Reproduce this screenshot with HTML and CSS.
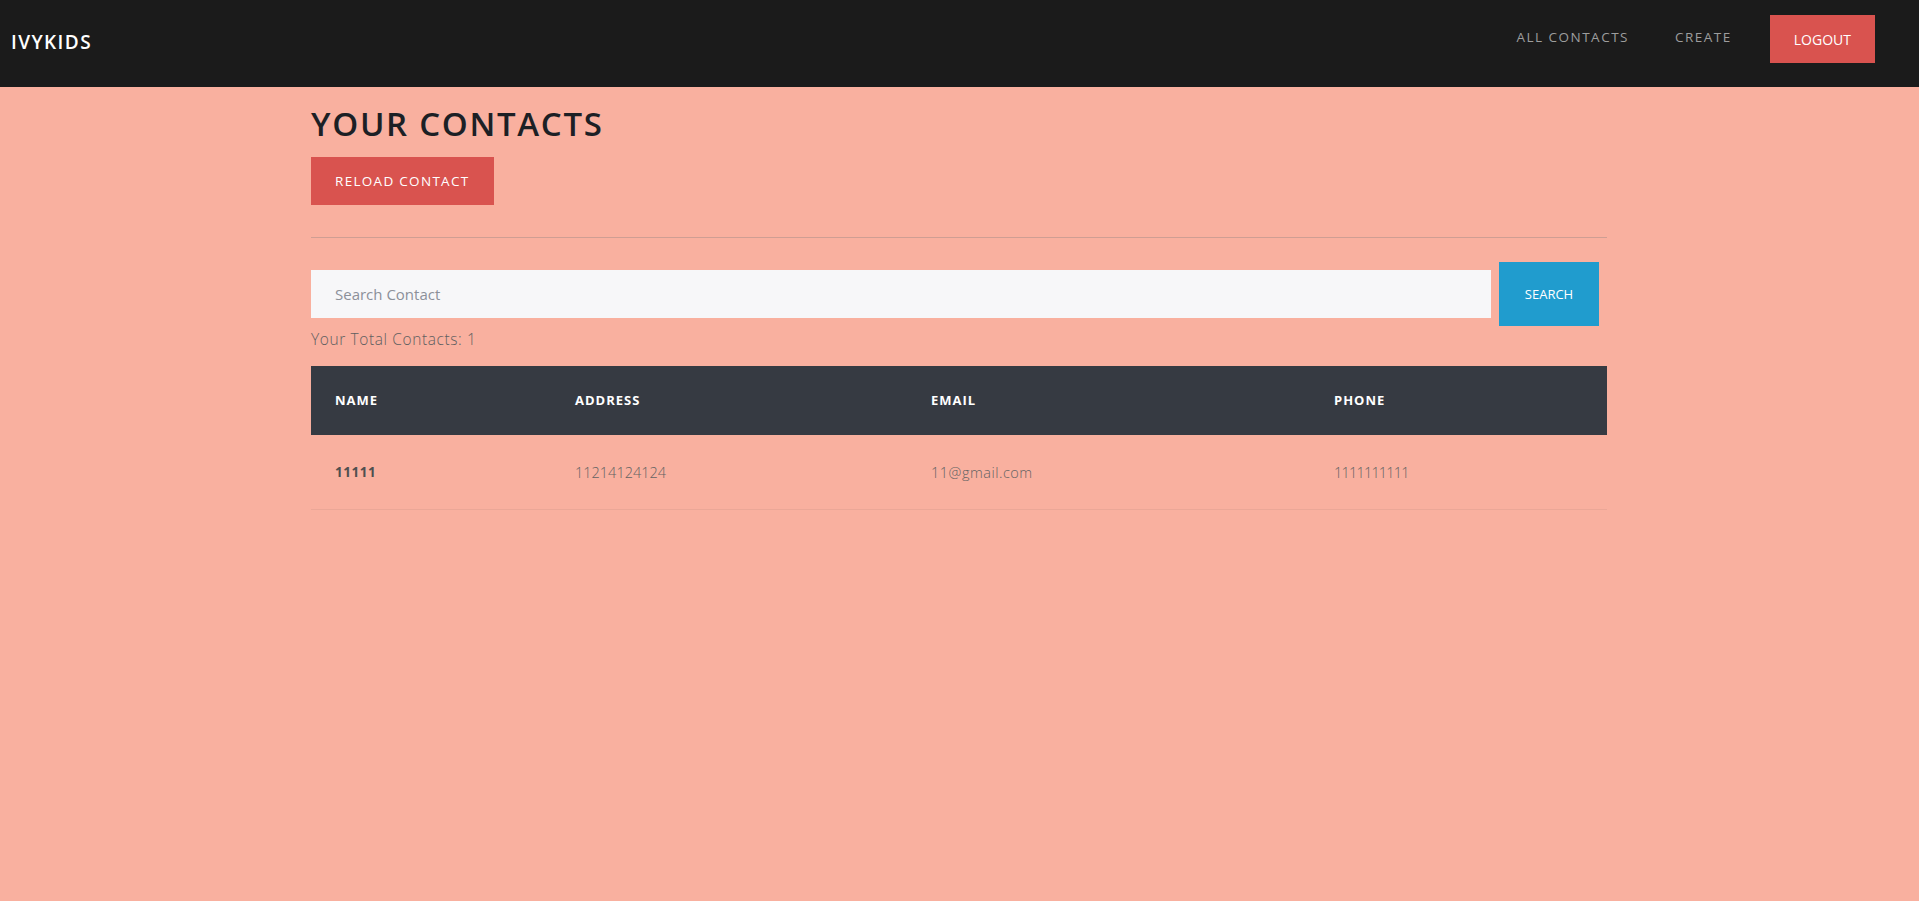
FILE: index.html
```html
<!DOCTYPE html>
<html lang="en">
<head>
<meta charset="utf-8">
<title>IvyKids Contacts</title>
<link rel="stylesheet" href="styles.css">
</head>
<body>
<nav class="navbar">
  <a class="brand" href="#">IVYKIDS</a>
  <div class="nav-right">
    <a class="nav-link link-all" href="#">ALL CONTACTS</a>
    <a class="nav-link link-create" href="#">CREATE</a>
    <button class="btn btn-logout">LOGOUT</button>
  </div>
</nav>
<main class="container">
  <h1 class="title">YOUR CONTACTS</h1>
  <button class="btn btn-reload">RELOAD CONTACT</button>
  <hr class="divider">
  <form class="search">
    <input class="search-input" type="text" placeholder="Search Contact">
    <button class="btn btn-search" type="button">SEARCH</button>
  </form>
  <p class="total">Your Total Contacts: 1</p>
  <table class="contacts">
    <colgroup>
      <col class="c-name"><col class="c-address"><col class="c-email"><col class="c-phone">
    </colgroup>
    <thead>
      <tr><th>NAME</th><th>ADDRESS</th><th>EMAIL</th><th>PHONE</th></tr>
    </thead>
    <tbody>
      <tr><td class="name">11111</td><td>11214124124</td><td class="email">11@gmail.com</td><td class="phone">1111111111</td></tr>
    </tbody>
  </table>
</main>
</body>
</html>
```
FILE: styles.css
```css
* { box-sizing: border-box; }
html, body { margin: 0; padding: 0; }
body {
  background: #f9b09f;
  font-family: "Open Sans", "Noto Sans", sans-serif;
  min-height: 901px;
}
.navbar {
  height: 87px;
  background: #1b1b1b;
  display: flex;
  justify-content: space-between;
  align-items: center;
  padding: 0 44px 0 11px;
}
.brand {
  color: #fff;
  text-decoration: none;
  font-size: 19px;
  font-weight: 600;
  letter-spacing: 1.4px;
  margin-top: -4px;
}
.nav-right {
  align-self: flex-start;
  margin-top: 15px;
  height: 48px;
  display: flex;
  align-items: center;
}
.nav-link {
  color: #9d9d9d;
  text-decoration: none;
  font-size: 13.5px;
  letter-spacing: 1.5px;
  margin-top: -4px;
}
.link-all { margin-right: 46px; }
.link-create { margin-right: 38px; }
.btn {
  border: 0;
  font-family: "Open Sans", "Noto Sans", sans-serif;
  color: #fff;
  cursor: pointer;
}
.btn-logout {
  background: #d9534f;
  height: 48px;
  padding: 0 24px;
  font-size: 14px;
}
.container {
  width: 1296px;
  margin: 0 0 0 311px;
  padding-top: 17px;
}
.title {
  margin: 0;
  font-size: 33px;
  line-height: 1.2;
  font-weight: 600;
  letter-spacing: 1.7px;
  color: #1c2025;
}
.btn-reload {
  display: block;
  margin-top: 13px;
  background: #d9534f;
  height: 48px;
  padding: 0 24px;
  font-size: 13.5px;
  letter-spacing: 1.3px;
}
.divider {
  margin: 32px 0 24px;
  border: 0;
  border-top: 1px solid #cf9e93;
  height: 0;
}
.search {
  display: flex;
  align-items: center;
  margin: 0;
}
.search-input {
  width: 1180px;
  height: 48px;
  border: 0;
  background: #f7f7f9;
  padding: 0 24px;
  font-family: "Open Sans", "Noto Sans", sans-serif;
  font-size: 15px;
  color: #333;
  outline: none;
}
.search-input::placeholder { color: #8c9099; }
.btn-search {
  margin-left: 8px;
  width: 100px;
  height: 64px;
  background: #209cce;
  font-size: 13px;
}
.total {
  margin: 1px 0 15px;
  font-size: 15.5px;
  line-height: 24px;
  font-weight: 300;
  color: #5f5f5f;
  letter-spacing: 0.6px;
}
.contacts {
  width: 100%;
  border-collapse: collapse;
  table-layout: fixed;
}
.c-name { width: 240px; }
.c-address { width: 356px; }
.c-email { width: 403px; }
.c-phone { width: 297px; }
.contacts th {
  background: #363a42;
  color: #fff;
  text-align: left;
  height: 69px;
  padding: 0 24px;
  font-size: 13px;
  font-weight: 700;
  letter-spacing: 1px;
}
.contacts td {
  height: 75px;
  padding: 2px 24px 0;
  border-bottom: 1px solid #eba797;
  font-size: 14.5px;
  font-weight: 300;
  color: #636363;
}
.contacts td.name {
  font-weight: 700;
  color: #4f4f4f;
  font-size: 13.5px;
  letter-spacing: 0.5px;
  padding-top: 0;
}
.contacts td.email { letter-spacing: 0.5px; }
.contacts td.phone { letter-spacing: -0.8px; }
```
